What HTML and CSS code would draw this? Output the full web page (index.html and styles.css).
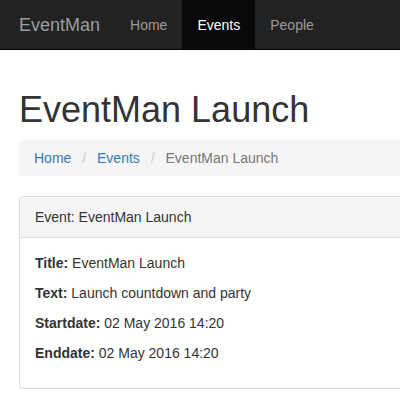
FILE: index.html
```html
<!DOCTYPE html>
<html>
<head>
<meta charset="utf-8">
<link rel="stylesheet" href="styles.css">
</head>
<body>
<nav class="navbar">
  <a class="brand" href="#">EventMan</a>
  <ul class="nav">
    <li><a href="#">Home</a></li>
    <li class="active"><a href="#">Events</a></li>
    <li><a href="#">People</a></li>
  </ul>
</nav>
<div class="container">
  <h1>EventMan Launch</h1>
  <ol class="breadcrumb">
    <li><a href="#">Home</a></li>
    <li><a href="#">Events</a></li>
    <li class="active">EventMan Launch</li>
  </ol>
  <div class="panel">
    <div class="panel-heading">Event: EventMan Launch</div>
    <div class="panel-body">
      <p><b>Title:</b> EventMan Launch</p>
      <p><b>Text:</b> Launch countdown and party</p>
      <p><b>Startdate:</b> 02 May 2016 14:20</p>
      <p><b>Enddate:</b> 02 May 2016 14:20</p>
    </div>
  </div>
</div>
</body>
</html>
```
FILE: styles.css
```css
html, body {
  margin: 0;
  padding: 0;
  overflow: hidden;
}
body {
  font-family: "Liberation Sans", Arial, sans-serif;
  font-size: 14px;
  line-height: 20px;
  color: #333;
  background: #fff;
}
a { text-decoration: none; }
.navbar {
  display: flex;
  background: #222;
  border-bottom: 1px solid #080808;
  height: 49px;
  padding-left: 4px;
  margin-bottom: 20px;
}
.brand {
  display: block;
  padding: 15px;
  font-size: 18px;
  line-height: 20px;
  height: 19px;
  color: #9d9d9d;
}
.nav {
  display: flex;
  list-style: none;
  margin: 0;
  padding: 0;
}
.nav a {
  display: block;
  padding: 15px 15px 14px;
  color: #9d9d9d;
}
.nav .active a {
  background: #080808;
  color: #fff;
}
.container {
  display: flow-root;
  padding-left: 19px;
  width: 620px;
}
h1 {
  font-size: 36px;
  font-weight: 500;
  line-height: 1.1;
  margin: 20px 0 10px;
}
.breadcrumb {
  list-style: none;
  margin: 0 0 20px;
  padding: 8px 15px;
  background: #f5f5f5;
  border-radius: 4px;
}
.breadcrumb li {
  display: inline-block;
}
.breadcrumb li + li::before {
  content: "/\00a0";
  padding: 0 7px;
  color: #ccc;
}
.breadcrumb a { color: #337ab7; }
.breadcrumb .active { color: #777; }
.panel {
  border: 1px solid #ddd;
  border-radius: 4px;
  box-shadow: 0 1px 1px rgba(0,0,0,.05);
}
.panel-heading {
  padding: 10px 15px;
  background: #f5f5f5;
  border-bottom: 1px solid #ddd;
  border-radius: 3px 3px 0 0;
}
.panel-body {
  padding: 15px;
}
.panel-body p {
  margin: 0 0 10px;
}
```
